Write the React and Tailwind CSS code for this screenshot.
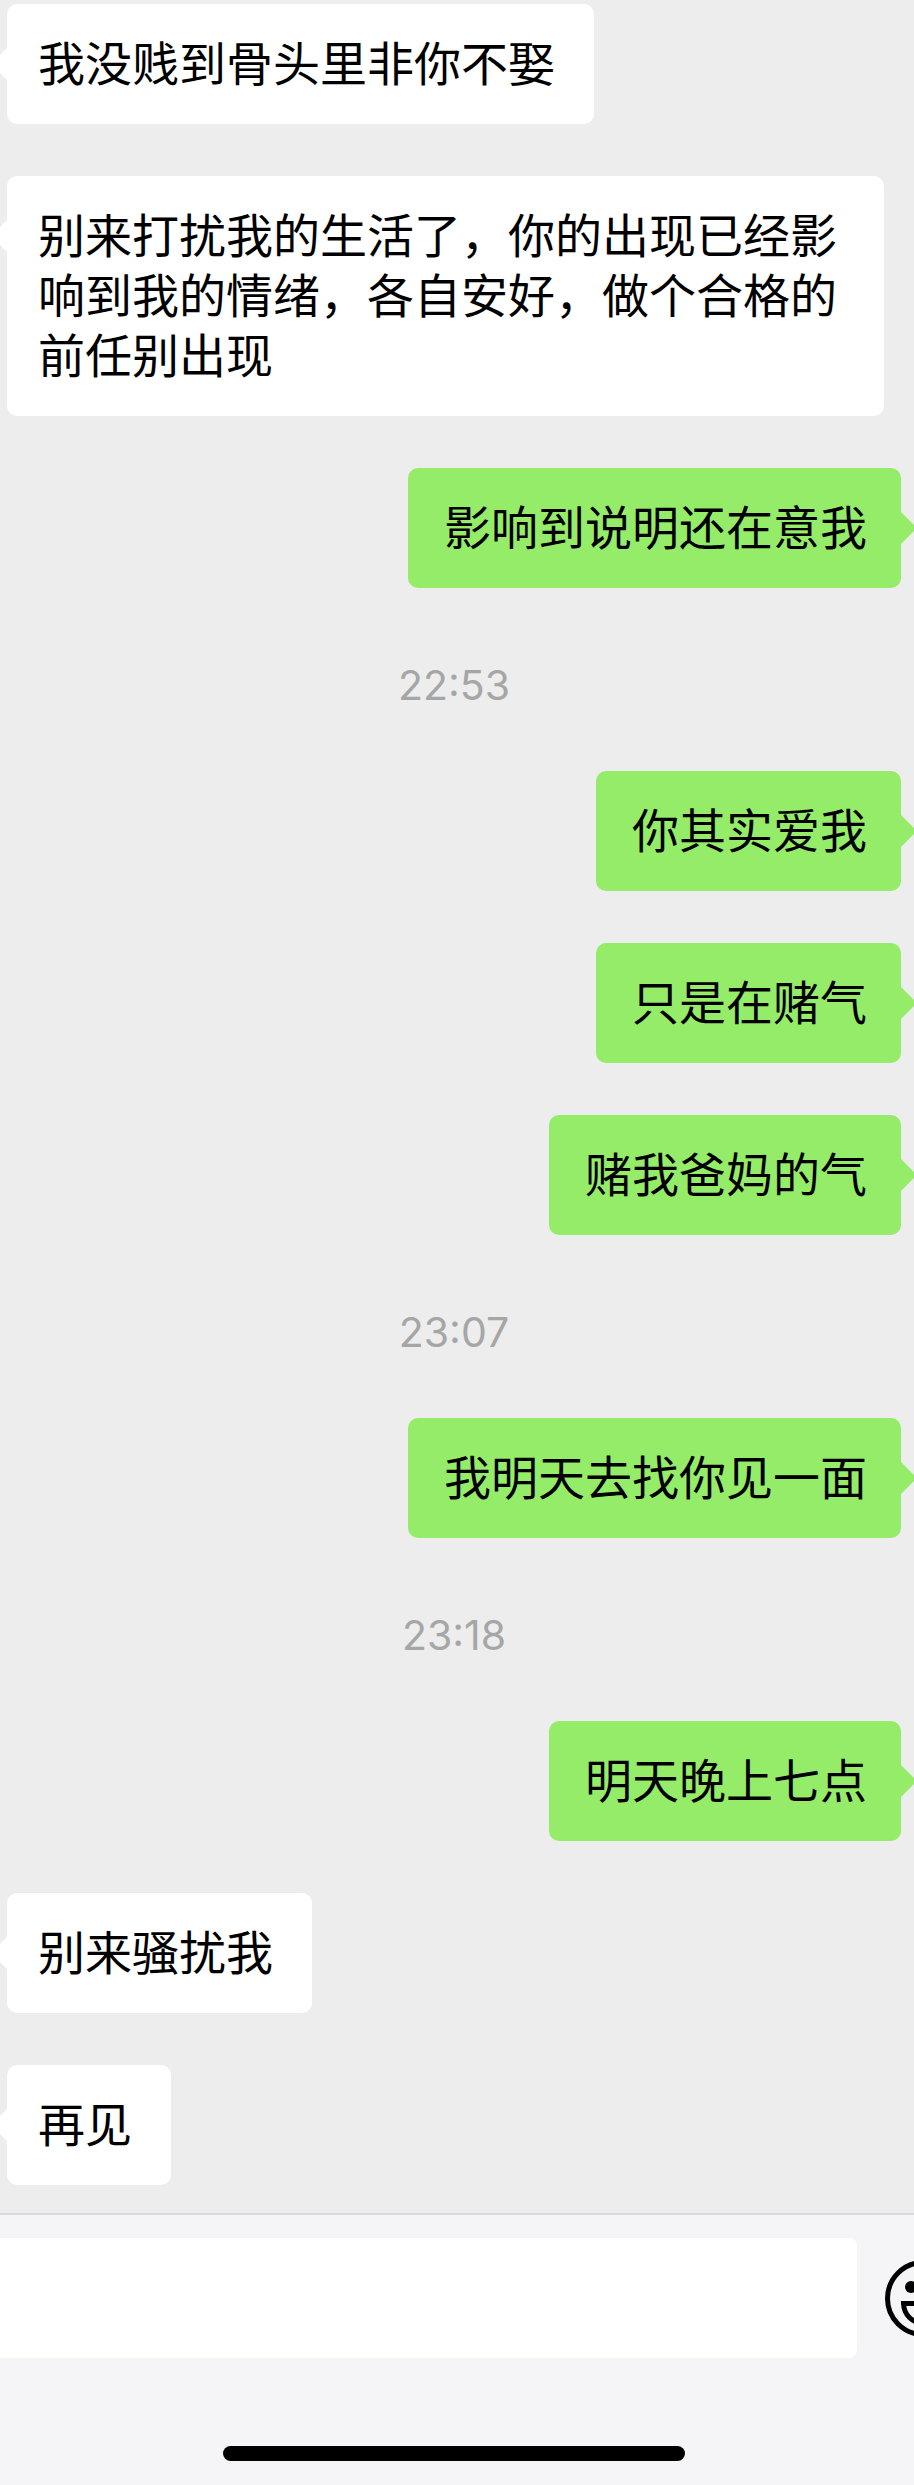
import clsx from 'clsx';

const items = [
  { type: 'in', text: '我没贱到骨头里非你不娶' },
  { type: 'in', text: '别来打扰我的生活了，你的出现已经影响到我的情绪，各自安好，做个合格的前任别出现' },
  { type: 'out', text: '影响到说明还在意我' },
  { type: 'time', text: '22:53' },
  { type: 'out', text: '你其实爱我' },
  { type: 'out', text: '只是在赌气' },
  { type: 'out', text: '赌我爸妈的气' },
  { type: 'time', text: '23:07' },
  { type: 'out', text: '我明天去找你见一面' },
  { type: 'time', text: '23:18' },
  { type: 'out', text: '明天晚上七点' },
  { type: 'in', text: '别来骚扰我' },
  { type: 'in', text: '再见' },
];

function Timestamp({ children }) {
  return (
    <time className="block pt-3 pr-1.5 text-center font-['Inter','Liberation_Sans',sans-serif] text-[41px] leading-[67px] text-[#a6a6a6]">
      {children}
    </time>
  );
}

function Tail({ out }) {
  return (
    <svg
      viewBox="0 0 16 32"
      className={clsx(
        'absolute top-11 h-8 w-4',
        out ? 'left-full text-[#95ec69]' : 'right-full -scale-x-100 text-white'
      )}
      aria-hidden="true"
    >
      <path d="M0 0 L13 13 Q16 16 13 19 L0 32 Z" fill="currentColor" />
    </svg>
  );
}

function Bubble({ out, children }) {
  return (
    <div className={clsx('flex', out ? 'justify-end pr-[13px]' : 'justify-start pl-[7px]')}>
      <div
        className={clsx(
          'relative max-w-[877px] rounded-[10px] pt-[27px] pb-[33px] text-[47px] leading-[60px] text-black',
          out ? 'bg-[#95ec69] pr-[34px] pl-9' : 'bg-white pr-[39px] pl-[31px]'
        )}
      >
        <Tail out={out} />
        <p>{children}</p>
      </div>
    </div>
  );
}

function SmileIcon() {
  return (
    <svg viewBox="0 0 77 77" className="h-[77px] w-[77px] max-w-none" aria-hidden="true">
      <circle cx="38.5" cy="38.5" r="36" fill="none" stroke="#000" strokeWidth="5" />
      <circle cx="26" cy="27" r="6" />
      <circle cx="51" cy="27" r="6" />
      <path d="M18.5 43.5 H58.5 C58 55 50 63 38.5 63 C27 63 19 55 18.5 43.5 Z" fill="none" stroke="#000" strokeWidth="5" />
    </svg>
  );
}

export default function App() {
  return (
    <div
      lang="zh-CN"
      className="min-h-screen overflow-hidden bg-[#ededed] font-['Noto_Sans_CJK_SC',sans-serif]"
    >
      <main className="flex flex-col gap-[52px] pt-1 pb-7">
        {items.map((item) =>
          item.type === 'time' ? (
            <Timestamp key={item.text}>{item.text}</Timestamp>
          ) : (
            <Bubble key={item.text} out={item.type === 'out'}>
              {item.text}
            </Bubble>
          )
        )}
      </main>

      <footer className="border-t-2 border-[#d9d9db] bg-[#f5f5f7] pt-[23px]">
        <div className="flex items-center gap-7">
          <input
            type="text"
            aria-label="输入消息"
            className="h-[120px] min-w-0 flex-1 rounded-r-[8px] bg-white px-8 text-[47px] outline-none"
          />
          <button type="button" aria-label="表情" className="w-[29px] shrink-0 overflow-hidden">
            <SmileIcon />
          </button>
        </div>

        {/* Home indicator */}
        <div className="flex justify-center pt-[88px] pr-1.5 pb-6">
          <div className="h-[15px] w-[462px] rounded-full bg-black" />
        </div>
      </footer>
    </div>
  );
}
